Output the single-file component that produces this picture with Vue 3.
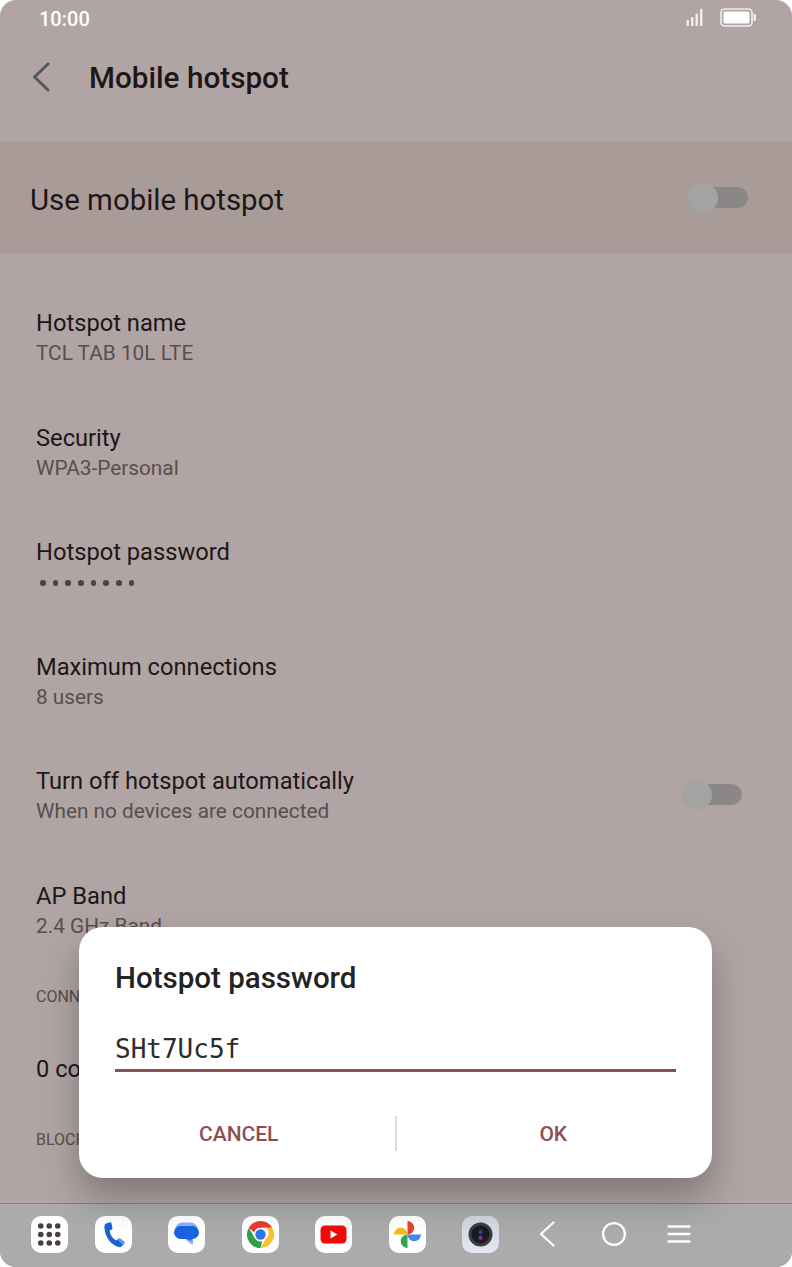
<script setup>
const rows = [
  { t: 'Hotspot name', s: 'TCL TAB 10L LTE' },
  { t: 'Security', s: 'WPA3-Personal' },
  { t: 'Hotspot password', dots: 8 },
  { t: 'Maximum connections', s: '8 users' },
  { t: 'Turn off hotspot automatically', s: 'When no devices are connected', sw: true },
  { t: 'AP Band', s: '2.4 GHz Band' },
]
const grid = []
for (let y = 0; y < 3; y++) for (let x = 0; x < 3; x++) grid.push({ cx: 9.75 + x * 8.5, cy: 10 + y * 8.5 })
</script>

<template>
  <div class="screen">
    <div class="status">
      <span class="time">10:00</span>
      <div class="status-icons">
        <svg class="signal" width="17" height="17" viewBox="0 0 17 17">
          <rect x="0.5" y="11" width="2.4" height="6" rx=".6" />
          <rect x="5" y="8" width="2.4" height="9" rx=".6" />
          <rect x="9.5" y="4.5" width="2.4" height="12.5" rx=".6" />
          <rect x="14" y="0" width="2.4" height="17" rx=".6" />
        </svg>
        <svg width="36" height="19" viewBox="0 0 36 19">
          <rect x="1" y="1" width="31" height="17" rx="3.5" fill="none" stroke="#f3eeee" stroke-width="1.6" />
          <rect x="3.5" y="3.5" width="26" height="12" rx="1.5" fill="#fff" />
          <path d="M33.5 6h1a1.5 1.5 0 0 1 1.5 1.5v4a1.5 1.5 0 0 1-1.5 1.5h-1z" fill="#f3eeee" />
        </svg>
      </div>
    </div>

    <header class="appbar">
      <svg class="back" width="20" height="30" viewBox="0 0 20 30">
        <path d="M17 2 L3.5 15 L17 28" fill="none" stroke="#54585a" stroke-width="3" stroke-linecap="round" stroke-linejoin="round" />
      </svg>
      <h1 class="title">Mobile hotspot</h1>
    </header>

    <section class="master">
      <span>Use mobile hotspot</span>
      <div class="switch"><i></i></div>
    </section>

    <div class="list">
      <div v-for="r in rows" :key="r.t" class="row">
        <div>
          <div class="row-title">{{ r.t }}</div>
          <div v-if="r.dots" class="dots"><i v-for="n in r.dots" :key="n"></i></div>
          <div v-else class="row-sub">{{ r.s }}</div>
        </div>
        <div v-if="r.sw" class="switch"><i></i></div>
      </div>
      <div class="section-label first">CONNECTED DEVICES</div>
      <div class="plain">0 connected devices</div>
      <div class="section-label second">BLOCKED DEVICES</div>
    </div>

    <nav class="dock">
      <div class="dock-icons">
        <div class="app launcher">
          <svg width="37" height="37" viewBox="0 0 37 37">
            <circle v-for="(g, i) in grid" :key="i" :cx="g.cx" :cy="g.cy" r="2.8" fill="#4a3f3f" />
          </svg>
        </div>
        <div class="app">
          <svg width="37" height="37" viewBox="0 0 37 37">
            <path d="M11 7.500 14.600 6.400c1-.3 1.700.2 1.900 1.100l.9 4.300c.2.8-.1 1.400-.8 1.800l-2 1.200c.6 4.400 3 7.900 6.500 9.600l1.900-1.400c.7-.5 1.400-.5 2 0l3.500 2.800c.7.6.8 1.400.2 2.100l-2 2.400c-.7.8-1.600 1-2.600.8C16.400 29.200 10.500 22 9.500 12.500 9.300 10.300 9.500 8.300 11 7.500Z" fill="#1a62d6" />
            <path d="M22.500 23.500l1.200-.8c.7-.5 1.400-.5 2 0l3.500 2.800c.7.6.8 1.400.2 2.100l-1.300 1.600Z" fill="#5c9bf0" />
          </svg>
        </div>
        <div class="app">
          <svg width="37" height="37" viewBox="0 0 37 37">
            <rect x="7" y="6.500" width="23" height="15" rx="7.500" fill="#8ab4f8" />
            <path d="M16 22h9v5.500c0 1-1 1.300-1.700.7Z" fill="#8ab4f8" />
            <rect x="6" y="10" width="25" height="13" rx="6.500" fill="#1a62e0" />
            <path d="M17 22h7l-1 3Z" fill="#1a62e0" />
          </svg>
        </div>
        <div class="app">
          <svg width="37" height="37" viewBox="0 0 37 37">
            <path d="M18.500 5a13.500 13.500 0 0 1 11.700 6.750H18.500a6.750 6.750 0 0 0-6.400 4.700L6.800 11.750A13.500 13.500 0 0 1 18.500 5Z" fill="#e23d2f" />
            <path d="M30.200 11.750A13.500 13.500 0 0 1 18.500 32l5.800-10a6.750 6.750 0 0 0 .1-10.250Z" fill="#fbc02d" />
            <path d="M18.500 32A13.500 13.500 0 0 1 6.800 11.750l5.800 10a6.750 6.750 0 0 0 7.700 3.400Z" fill="#2f9e49" />
            <circle cx="18.500" cy="18.500" r="6.500" fill="#fff" />
            <circle cx="18.500" cy="18.500" r="5.200" fill="#2a76e4" />
          </svg>
        </div>
        <div class="app">
          <svg width="37" height="37" viewBox="0 0 37 37">
            <rect x="5.500" y="9.500" width="26" height="18" rx="4.500" fill="#f00a0a" />
            <path d="M15.500 14.500v8l6.800-4Z" fill="#fff" />
          </svg>
        </div>
        <div class="app">
          <svg width="37" height="37" viewBox="0 0 37 37">
            <path d="M18.500 18.500h-13.500a6.750 6.750 0 0 1 13.500 0Z" fill="#f6bb12" />
            <path d="M18.500 18.500v-13.500a6.750 6.750 0 0 1 0 13.500Z" fill="#e9402f" />
            <path d="M18.500 18.500h13.500a6.750 6.750 0 0 1-13.500 0Z" fill="#4a84ec" />
            <path d="M18.500 18.500v13.500a6.750 6.750 0 0 1 0-13.500Z" fill="#2fa54c" />
          </svg>
        </div>
        <div class="app cam">
          <svg width="37" height="37" viewBox="0 0 37 37">
            <circle cx="18.500" cy="18.500" r="12" fill="#3a3c44" />
            <circle cx="18.500" cy="18.500" r="9" fill="#191a20" />
            <ellipse cx="18.500" cy="16" rx="2" ry="2.600" fill="#2b3f95" />
            <ellipse cx="18.500" cy="21.800" rx="2" ry="2.200" fill="#8a2c80" />
          </svg>
        </div>
      </div>
      <div class="nav-keys">
        <svg width="20" height="26" viewBox="0 0 20 26">
          <path d="M16.500 1.500 L4 13 L16.500 24.500" fill="none" stroke="#fff" stroke-width="2.300" stroke-linecap="round" stroke-linejoin="round" />
        </svg>
        <svg width="26" height="26" viewBox="0 0 26 26">
          <circle cx="13" cy="13" r="10.900" fill="none" stroke="#fff" stroke-width="2.300" />
        </svg>
        <svg width="26" height="20" viewBox="0 0 26 20">
          <path d="M2.500 2.500H23.500M2.500 10H23.500M2.500 17.500H23.500" fill="none" stroke="#fff" stroke-width="2.300" stroke-linecap="round" />
        </svg>
      </div>
    </nav>

    <div class="dialog">
      <h2 class="dlg-title">Hotspot password</h2>
      <div class="field">SHt7Uc5f</div>
      <div class="actions">
        <button class="act cancel">CANCEL</button>
        <span class="sep"></span>
        <button class="act">OK</button>
      </div>
    </div>
  </div>
</template>

<style scoped>
.screen {
  position: relative;
  width: 792px;
  height: 1267px;
  overflow: hidden;
  border-radius: 16px;
  background: #b0a5a4;
  font-family: Roboto, sans-serif;
  display: flex;
  flex-direction: column;
  color: #1e1717;
}
.status {
  height: 38px;
  flex: none;
  display: flex;
  align-items: center;
  justify-content: space-between;
  padding: 0 36px 0 39px;
}
.time { color: #fff; font-size: 20px; font-weight: 500; }
.status-icons { display: flex; align-items: center; gap: 17px; margin-top: -3px; }
.signal { fill: #f3eeee; }
.appbar {
  height: 104px;
  flex: none;
  display: flex;
  align-items: center;
  padding: 0 0 26px 31px;
  box-sizing: border-box;
  gap: 38px;
}
.title { margin: 0; font-size: 29.700px; font-weight: 500; color: #1e1717; }
.master {
  height: 112px;
  flex: none;
  background: #a99c98;
  display: flex;
  align-items: center;
  justify-content: space-between;
  padding: 4px 44px 0 30px;
  box-sizing: border-box;
  font-size: 29.400px;
  color: #1e1717;
}
.master .switch { margin-top: -5px; }
.switch { position: relative; width: 54px; height: 21px; border-radius: 11px; background: #8a8786; }
.switch i { position: absolute; left: -6px; top: -4px; width: 30px; height: 30px; border-radius: 50%; background: #a3a3a2; }
.list { flex: 1; min-height: 0; padding: 51px 50px 0 36px; overflow: hidden; }
.row {
  height: 114.600px;
  display: flex;
  justify-content: space-between;
  align-items: flex-start;
}
.row .switch { margin-top: 21px; }
.row-title { font-size: 23.700px; line-height: 36px; color: #1e1717; }
.row-sub { font-size: 20.800px; line-height: 26px; color: #5a4e4e; margin-top: -1px; }
.dots { display: flex; gap: 7.200px; margin-top: 10px; padding-left: 4px; }
.dots i { width: 5.500px; height: 5.500px; border-radius: 50%; background: #4e4344; }
.section-label { font-size: 16px; color: #5a4e4e; }
.first { margin-top: -6px; }
.plain { font-size: 23.700px; margin-top: 49px; color: #1e1717; }
.second { margin-top: 47px; }
.dock {
  height: 64px;
  flex: none;
  box-sizing: border-box;
  border-top: 1px solid #8c8080;
  background: #ababab;
  display: flex;
  align-items: center;
  padding: 0 0 3px 31px;
}
.dock-icons { display: flex; gap: 36.400px; }
.launcher { margin-right: -9.400px; }
.app { width: 37px; height: 37px; border-radius: 10px; background: #fff; }
.cam { background: linear-gradient(#cdd6e2, #e3e7ee); }
.nav-keys { display: flex; align-items: center; gap: 39px; margin-left: 38.500px; }
.nav-keys svg:first-child { margin-right: 5px; }
.dialog {
  position: absolute;
  left: 79px;
  top: 927px;
  width: 633px;
  height: 251px;
  box-sizing: border-box;
  background: #fff;
  border-radius: 24px;
  box-shadow: 0 20px 36px rgba(0, 0, 0, 0.27);
  padding: 31px 36px 0;
  display: flex;
  flex-direction: column;
}
.dlg-title { margin: 0; font-size: 29.500px; font-weight: 500; color: #232323; line-height: 40px; }
.field {
  margin-top: 31px;
  font-family: "DejaVu Sans Mono", monospace;
  font-size: 26px;
  line-height: 40px;
  color: #2c2c2c;
  border-bottom: 3px solid #8c4f4f;
}
.actions {
  margin: 44px -34px 0;
  display: grid;
  grid-template-columns: 1fr auto 1fr;
  align-items: center;
  height: 35px;
}
.sep { width: 2px; height: 35px; background: #dcdcdc; }
.act {
  border: 0;
  background: none;
  padding: 0;
  font-family: Roboto, sans-serif;
  font-size: 21px;
  font-weight: 500;
  color: #8c4f4f;
}
.cancel { margin-left: 2px; }
</style>

<style>
html, body { background: #fff; }
</style>
